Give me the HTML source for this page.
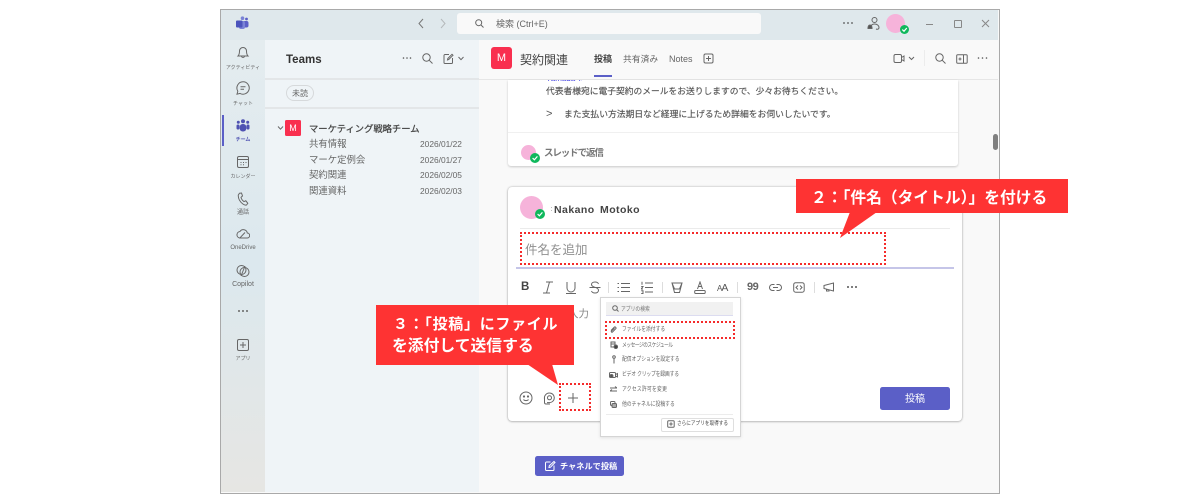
<!DOCTYPE html>
<html lang="ja"><head><meta charset="utf-8"><style>
html,body{margin:0;padding:0;background:#fff}
#p{position:relative;width:1200px;height:500px;overflow:hidden;background:#fff;font-family:"Liberation Sans","Noto Sans CJK JP",sans-serif;color:#424242}
#p div,#p svg{position:absolute}
.t{white-space:nowrap;line-height:1}
svg{fill:none;stroke:#666;stroke-width:1}
.rl{width:44px;left:221px;text-align:center;font-size:5px;color:#666;white-space:nowrap;line-height:1}
.m{left:622px;font-size:6px;color:#666;white-space:nowrap;line-height:1;transform:scaleX(.8);transform-origin:0 0}
.d{font-size:8.4px;color:#666;left:420px;line-height:1;white-space:nowrap}
.c{font-size:9.4px;color:#666;left:309px;line-height:1;white-space:nowrap}
</style></head><body><div id="p">
<!-- window -->
<div style="left:220px;top:9px;width:778px;height:483px;border:1px solid #a9a9a9;background:#f9f9f9"></div>
<div style="left:221px;top:10px;width:777px;height:30px;background:#dfe8ec"></div>
<div style="left:221px;top:40px;width:44px;height:452px;background:linear-gradient(#e4ecef,#dce8ee 50%,#e6e6e3)"></div>
<div style="left:265px;top:40px;width:214px;height:452px;background:#eff4f7"></div>
<div style="left:265px;top:78px;width:214px;height:2px;background:#e3e6e8"></div>
<div style="left:265px;top:107px;width:214px;height:2px;background:#e3e6e8"></div>
<div style="left:479px;top:40px;width:519px;height:39px;background:#f9f9f9;border-bottom:1px solid #e6e6e6"></div>

<!-- title bar -->
<svg style="left:235px;top:16px;stroke:none" width="14" height="14" viewBox="0 0 14 14"><circle cx="7.5" cy="2.2" r="1.8" fill="#7b83d6"/><circle cx="11.5" cy="3" r="1.4" fill="#5b5fc7"/><rect x="8" y="5" width="5.5" height="6.5" rx="2" fill="#5b5fc7"/><rect x="4" y="5" width="6" height="8" rx="2" fill="#7b83d6"/><rect x="1" y="4.5" width="6.5" height="7" rx="1" fill="#4b53bc"/></svg>
<svg style="left:417px;top:18px" width="8" height="11" viewBox="0 0 8 11"><path d="M6 1L2 5.5L6 10" stroke="#777"/></svg>
<svg style="left:439px;top:18px" width="8" height="11" viewBox="0 0 8 11"><path d="M2 1L6 5.5L2 10" stroke="#b5b9bb"/></svg>
<div style="left:457px;top:13px;width:304px;height:21px;background:#f9f9f9;border-radius:3px"></div>
<svg style="left:475px;top:19px" width="9" height="9" viewBox="0 0 9 9"><circle cx="3.7" cy="3.7" r="3"/><path d="M6 6L8.5 8.5"/></svg>
<div class="t" style="left:496px;top:20px;font-size:9px;color:#666">検索 (Ctrl+E)</div>
<svg style="left:842px;top:19px;stroke:none" width="12" height="8"><circle cx="2" cy="4" r=".9" fill="#555"/><circle cx="6" cy="4" r=".9" fill="#555"/><circle cx="10" cy="4" r=".9" fill="#555"/></svg>
<svg style="left:867px;top:16px" width="13" height="15" viewBox="0 0 13 15"><circle cx="7.5" cy="4" r="2.5"/><path d="M3 13c0-3 2-5 4.500-5s4.500 1.500 4.500 3.500-2 2-3 1.500"/><path d="M1 12.500c0-3 1-3.500 2-3.500s2 .5 2 3.500z" fill="#555"/></svg>
<div style="left:886px;top:14px;width:19px;height:19px;border-radius:50%;background:#f6b3da"></div>
<svg style="left:900px;top:25px;stroke:none" width="9" height="9" viewBox="0 0 9 9"><circle cx="4.5" cy="4.5" r="4.5" fill="#0fb85c"/><path d="M2.3 4.600L4 6.200L6.800 3" style="stroke:#fff;stroke-width:1.2"/></svg>
<div style="left:926px;top:24px;width:7px;height:1px;background:#888"></div>
<div style="left:954px;top:20px;width:6px;height:6px;border:1px solid #888;border-radius:1px"></div>
<svg style="left:981px;top:19px" width="9" height="9"><path d="M1 1L8 8M8 1L1 8" stroke="#888"/></svg>

<!-- rail -->
<svg style="left:236px;top:45px" width="14" height="15" viewBox="0 0 14 15"><path d="M2 11c1-1 1.500-2 1.500-5a3.500 3.500 0 017 0c0 3 .5 4 1.500 5zM5.500 11.500a1.600 1.600 0 003 0"/></svg>
<div class="rl" style="top:65.5px">アクティビティ</div>
<svg style="left:236px;top:81px" width="14" height="14" viewBox="0 0 14 14"><path d="M7 .8a6.200 6.200 0 11-3 11.600L1 13.200l.8-3A6.200 6.200 0 017 .8zM4.500 5.800h5M4.500 8.300h3.500"/></svg>
<div class="rl" style="top:101.5px">チャット</div>
<div style="left:222px;top:115px;width:2px;height:31px;background:#5b5fc7"></div>
<svg style="left:236px;top:119px;stroke:none" width="14" height="13" viewBox="0 0 14 13"><circle cx="7" cy="2.3" r="2" fill="#4f52b2"/><circle cx="2.3" cy="3.2" r="1.5" fill="#4f52b2"/><circle cx="11.7" cy="3.2" r="1.5" fill="#4f52b2"/><rect x="3.7" y="5" width="6.6" height="7.5" rx="3" fill="#4f52b2"/><rect x=".5" y="5.5" width="3" height="5" rx="1.4" fill="#4f52b2"/><rect x="10.5" y="5.5" width="3" height="5" rx="1.4" fill="#4f52b2"/></svg>
<div class="rl" style="top:137.5px;color:#4f52b2;font-weight:bold">チーム</div>
<svg style="left:236px;top:155px" width="14" height="14" viewBox="0 0 14 14"><rect x="1.5" y="1.5" width="11" height="11" rx="1.5"/><path d="M1.500 4.500h11M4.500 7.500h1M7 7.500h1M9.500 7.500h1M4.500 9.800h1M7 9.800h1"/></svg>
<div class="rl" style="top:174.5px">カレンダー</div>
<svg style="left:237px;top:192px" width="12" height="14" viewBox="0 0 12 14"><path d="M2.500 1.200L4.500 1l1 3-1.500 1.300c.4 1.800 1.500 3.300 3 4.300l1.800-.8 2 2.500-1.200 1.600c-1 .5-2.500 0-3.700-.9C3 10 1 6.500 1.300 3z"/></svg>
<div class="rl" style="top:210px;font-size:6px">通話</div>
<svg style="left:236px;top:228px" width="14" height="11" viewBox="0 0 14 11"><path d="M3.500 10h7.500a2.500 2.500 0 00.3-5A4 4 0 004 3.500 3.300 3.300 0 003.500 10zM4 9.800L9 4.500"/></svg>
<div class="rl" style="top:245px;font-size:6px">OneDrive</div>
<svg style="left:236px;top:264px" width="14" height="14" viewBox="0 0 14 14"><circle cx="5.5" cy="6" r="4.5"/><circle cx="8.5" cy="8" r="4.5"/><path d="M5 12L9 2"/></svg>
<div class="rl" style="top:281px;font-size:7px">Copilot</div>
<svg style="left:237px;top:308px;stroke:none" width="12" height="6"><circle cx="2" cy="3" r="1" fill="#666"/><circle cx="6" cy="3" r="1" fill="#666"/><circle cx="10" cy="3" r="1" fill="#666"/></svg>
<svg style="left:236px;top:338px" width="14" height="14" viewBox="0 0 14 14"><rect x="1.5" y="1.5" width="11" height="11" rx="1.5"/><path d="M7 4v6M4 7h6"/></svg>
<div class="rl" style="top:356.5px">アプリ</div>

<!-- teams panel -->
<div class="t" style="left:286px;top:54.5px;font-size:11.5px;font-weight:bold;color:#333">Teams</div>
<svg style="left:402px;top:55px;stroke:none" width="10" height="6"><circle cx="1.5" cy="3" r=".8" fill="#555"/><circle cx="5" cy="3" r=".8" fill="#555"/><circle cx="8.5" cy="3" r=".8" fill="#555"/></svg>
<svg style="left:422px;top:53px" width="11" height="11" viewBox="0 0 11 11"><circle cx="4.5" cy="4.5" r="3.7"/><path d="M7.300 7.300L10.500 10.500"/></svg>
<svg style="left:443px;top:53px" width="22" height="11" viewBox="0 0 22 11"><path d="M6 1.500H2a1 1 0 00-1 1v7a1 1 0 001 1h6.500a1 1 0 001-1V5M4.500 7l.3-1.500L9 1.300 10 2.300 5.800 6.500z"/><path d="M15.500 4l2.500 2.700L20.500 4"/></svg>
<div class="t" style="left:286px;top:85px;width:26px;height:14px;border:1px solid #d6d9db;border-radius:8px;font-size:8px;line-height:15px;text-align:center;color:#666">未読</div>
<svg style="left:277px;top:125px" width="7" height="6"><path d="M1 1.500L3.500 4.200L6 1.500" stroke="#666"/></svg>
<div class="t" style="left:285px;top:120px;width:16px;height:16px;background:#f92f4f;border-radius:1.5px;color:#fff;font-size:9px;line-height:16px;text-align:center">M</div>
<div class="t" style="left:309px;top:125px;font-size:9.3px;color:#444;-webkit-text-stroke:.25px #444">マーケティング戦略チーム</div>
<div class="c" style="top:139px">共有情報</div><div class="d" style="top:140px">2026/01/22</div>
<div class="c" style="top:155px">マーケ定例会</div><div class="d" style="top:156px">2026/01/27</div>
<div class="c" style="top:170px">契約関連</div><div class="d" style="top:171px">2026/02/05</div>
<div class="c" style="top:186px">関連資料</div><div class="d" style="top:187px">2026/02/03</div>

<!-- channel header -->
<div class="t" style="left:491px;top:47px;width:21px;height:22px;background:#f92f4f;border-radius:3px;color:#fff;font-size:11px;line-height:22px;text-align:center">M</div>
<div class="t" style="left:520px;top:54px;font-size:12px;color:#424242">契約関連</div>
<div class="t" style="left:594px;top:55px;font-size:9px;font-weight:bold;color:#444">投稿</div>
<div style="left:594px;top:75px;width:18px;height:2px;background:#5b5fc7"></div>
<div class="t" style="left:623px;top:55px;font-size:8.8px;color:#666">共有済み</div>
<div class="t" style="left:669px;top:55px;font-size:9px;color:#666">Notes</div>
<svg style="left:703px;top:53px" width="11" height="11" viewBox="0 0 11 11"><rect x="1" y="1" width="9" height="9" rx="1.5"/><path d="M5.500 3v5M3 5.500h5"/></svg>
<svg style="left:893px;top:53px" width="24" height="11" viewBox="0 0 24 11"><rect x="1" y="1.5" width="7.5" height="8" rx="1.5"/><path d="M8.500 4.500L11 3v5L8.500 6.500M16 4l2.500 2.500L21 4"/></svg>
<div style="left:924px;top:50px;width:1px;height:16px;background:#ececec"></div>
<svg style="left:935px;top:53px" width="11" height="11" viewBox="0 0 11 11"><circle cx="4.5" cy="4.5" r="3.7"/><path d="M7.300 7.300L10.500 10.500"/></svg>
<svg style="left:956px;top:54px" width="12" height="10" viewBox="0 0 12 10"><rect x=".7" y=".7" width="10.500" height="8.500" rx="1"/><path d="M7.500 .7v8.500M2.500 5h3M4 3.500v3"/></svg>
<svg style="left:977px;top:55px;stroke:none" width="11" height="6"><circle cx="1.5" cy="3" r=".8" fill="#555"/><circle cx="5.5" cy="3" r=".8" fill="#555"/><circle cx="9.5" cy="3" r=".8" fill="#555"/></svg>

<!-- message card -->
<div style="left:508px;top:80px;width:450px;height:86px;background:#fff;border-radius:0 0 3px 3px;box-shadow:0 1px 2px rgba(0,0,0,.2)"></div>
<div class="t" style="left:546px;top:80px;height:2px;font-size:8px;color:#3a3ae0;overflow:hidden;width:36px"><span style="position:relative;top:-5px">Yamada Taro</span></div>
<div class="t" style="left:546px;top:87px;font-size:8.75px;color:#555;-webkit-text-stroke:.15px #555">代表者様宛に電子契約のメールをお送りしますので、少々お待ちください。</div>
<div class="t" style="left:546px;top:109px;font-size:11px;color:#555">&gt;</div>
<div class="t" style="left:564px;top:110px;font-size:8.8px;color:#555;-webkit-text-stroke:.15px #555">また支払い方法期日など経理に上げるため詳細をお伺いしたいです。</div>
<div style="left:508px;top:132px;width:450px;height:1px;background:#f0f0f0"></div>
<div style="left:521px;top:145px;width:15px;height:15px;border-radius:50%;background:#f6b3da"></div>
<svg style="left:530px;top:153px;stroke:none" width="10" height="10" viewBox="0 0 10 10"><circle cx="5" cy="5" r="5" fill="#0fb85c"/><path d="M2.600 5.100L4.400 6.800L7.400 3.400" style="stroke:#fff;stroke-width:1.2"/></svg>
<div class="t" style="left:544px;top:149px;font-size:9.5px;color:#777;font-weight:bold;letter-spacing:-1.1px">スレッドで返信</div>

<!-- scrollbar -->
<div style="left:993px;top:134px;width:5px;height:16px;background:#808080;border-radius:3px"></div>

<!-- compose card -->
<div style="left:508px;top:187px;width:454px;height:234px;background:#fff;border-radius:4px;box-shadow:0 0 2px rgba(0,0,0,.3),0 1px 2px rgba(0,0,0,.15)"></div>
<div style="left:520px;top:196px;width:23px;height:23px;border-radius:50%;background:#f6b3da"></div>
<svg style="left:535px;top:209px;stroke:none" width="10" height="10" viewBox="0 0 10 10"><circle cx="5" cy="5" r="5" fill="#0fb85c"/><path d="M2.600 5.100L4.400 6.800L7.400 3.400" style="stroke:#fff;stroke-width:1.2"/></svg>
<div style="left:551px;top:207px;width:1px;height:1px;background:#bbb"></div>
<div style="left:551px;top:210px;width:1px;height:1px;background:#bbb"></div>
<div class="t" style="left:554px;top:205px;font-size:10.5px;font-weight:bold;color:#444;letter-spacing:.45px;word-spacing:2px">Nakano Motoko</div>
<div style="left:520px;top:228px;width:430px;height:1px;background:#ebebeb"></div>
<div class="t" style="left:525px;top:244px;font-size:12.5px;color:#8f8f8f">件名を追加</div>
<div style="left:516px;top:267px;width:438px;height:2px;background:#c5c5e8"></div>
<div style="left:520px;top:232px;width:362px;height:29px;border:2px dotted #f52b2b"></div>

<!-- toolbar -->
<div class="t" style="left:521px;top:282px;font-size:11.5px;font-weight:bold;color:#444">B</div>
<svg style="left:542px;top:281px" width="12" height="13" viewBox="0 0 12 13"><path d="M4 1h7M1 12h7M7.500 1L4.500 12"/></svg>
<svg style="left:565px;top:281px" width="12" height="13" viewBox="0 0 12 13"><path d="M2 1v6a4 4 0 008 0V1M1 12.500h10"/></svg>
<svg style="left:589px;top:281px" width="12" height="13" viewBox="0 0 12 13"><path d="M9.500 3C9 1.500 7.500 1 6 1 4 1 2.500 2 2.500 3.500S4 5.700 6 6.300s3.500 1.300 3.500 3S8 12 6 12c-1.500 0-3-.5-3.500-2M.5 6.500h11"/></svg>
<div style="left:608px;top:282px;width:1px;height:11px;background:#ddd"></div>
<svg style="left:617px;top:282px" width="13" height="11" viewBox="0 0 13 11"><path d="M4 1.500h9M4 5.500h9M4 9.500h9M.5 1.500h1.500M.5 5.500h1.500M.5 9.500h1.500"/></svg>
<svg style="left:641px;top:281px" width="12" height="13" viewBox="0 0 12 13"><path d="M4 2h8M4 6.500h8M4 11h8M1 .8v3M.2 5.500h1.800L.2 8h1.800M.2 9.800h1.800v2.700H.2"/></svg>
<div style="left:662px;top:282px;width:1px;height:11px;background:#ddd"></div>
<svg style="left:671px;top:281px" width="12" height="13" viewBox="0 0 12 13"><path d="M1 2h10L8.500 8h-5zM1 2l2.500 9.500h5L11 2"/></svg>
<svg style="left:694px;top:281px" width="12" height="13" viewBox="0 0 12 13"><path d="M3.500 8L6 1l2.500 7M4.500 5.500h3"/><rect x=".7" y="9.500" width="10.500" height="3" rx="1"/></svg>
<div class="t" style="left:717px;top:283px;font-size:10.5px;color:#555;letter-spacing:-1px"><span style="font-size:8px">A</span>A</div>
<div style="left:737px;top:282px;width:1px;height:11px;background:#ddd"></div>
<div class="t" style="left:747px;top:282px;font-size:11px;font-weight:bold;color:#666;letter-spacing:-.5px">99</div>
<svg style="left:769px;top:283px" width="13" height="9" viewBox="0 0 13 9"><path d="M5.500 1.500H3.500a3 3 0 000 6h2M7.500 1.500h2a3 3 0 010 6h-2M4 4.500h5"/></svg>
<svg style="left:793px;top:282px" width="12" height="11" viewBox="0 0 12 11"><rect x=".7" y=".7" width="10.500" height="9.500" rx="2"/><path d="M5 3.500L3 5.500l2 2M7 3.500l2 2-2 2"/></svg>
<div style="left:814px;top:282px;width:1px;height:11px;background:#ddd"></div>
<svg style="left:823px;top:282px" width="12" height="11" viewBox="0 0 12 11"><path d="M1 3.500L10.500 1v8L1 6.500zM3.500 7v2h2.500V8"/></svg>
<svg style="left:846px;top:284px;stroke:none" width="12" height="6"><circle cx="2" cy="3" r="1" fill="#555"/><circle cx="6" cy="3" r="1" fill="#555"/><circle cx="10" cy="3" r="1" fill="#555"/></svg>

<div class="t" style="left:568px;top:309px;font-size:10.5px;color:#888">入力</div>

<!-- bottom icons -->
<svg style="left:519px;top:391px" width="14" height="14" viewBox="0 0 14 14"><circle cx="7" cy="7" r="6"/><path d="M4.500 8.500c1 1.500 4 1.500 5 0"/><circle cx="5" cy="5.500" r=".6" fill="#555"/><circle cx="9" cy="5.500" r=".6" fill="#555"/></svg>
<svg style="left:543px;top:392px" width="12" height="13" viewBox="0 0 12 13"><path d="M6.500 1a4.800 4.800 0 110 9.600H4M1.500 7A5 5 0 016.500 1M1.500 4.500v6a1.500 1.500 0 001.500 1.500h4"/><circle cx="6.500" cy="5.800" r="2"/></svg>
<svg style="left:567px;top:392px" width="12" height="12"><path d="M6 1v10M1 6h10" stroke="#666"/></svg>
<div style="left:559px;top:383px;width:28px;height:24px;border:2px dotted #f52b2b"></div>
<div class="t" style="left:880px;top:387px;width:70px;height:23px;background:#5b5fc7;border-radius:2.5px;color:#fff;font-size:10px;line-height:25px;text-align:center">投稿</div>

<!-- popup -->
<div style="left:600px;top:297px;width:139px;height:138px;background:#fff;border:1px solid #d5d5d5;box-shadow:0 1px 3px rgba(0,0,0,.1)"></div>
<div style="left:606px;top:302px;width:127px;height:13px;background:#f1f1f1;border-bottom:1px solid #dcdcf0"></div>
<svg style="left:612px;top:305px" width="7" height="7" viewBox="0 0 7 7"><circle cx="3" cy="3" r="2.3"/><path d="M4.700 4.700L6.500 6.500"/></svg>
<div class="m" style="left:621px;top:307px;color:#777">アプリの検索</div>
<div class="m" style="top:327px">ファイルを添付する</div>
<svg style="left:610px;top:326px" width="7" height="7" viewBox="0 0 7 7"><path d="M1 4.500L4.500 1a1.200 1.200 0 011.500 1.500L2.500 6A.7.7 0 011.500 5L4.500 2.300"/></svg>
<div class="m" style="top:343px;letter-spacing:-.7px">メッセージのスケジュール</div>
<svg style="left:610px;top:341px" width="8" height="8" viewBox="0 0 8 8"><path d="M1 1h4v5H1zM1 3h4"/><circle cx="5.8" cy="5.800" r="1.8" fill="#444"/></svg>
<div class="m" style="top:357px">配信オプションを設定する</div>
<svg style="left:611px;top:355px" width="6" height="9" viewBox="0 0 6 9"><circle cx="3" cy="2" r="1.3"/><path d="M3 3.500v5"/></svg>
<div class="m" style="top:372px;letter-spacing:-.2px">ビデオ クリップを録画する</div>
<svg style="left:609px;top:371px" width="9" height="8" viewBox="0 0 9 8"><rect x=".5" y="1.5" width="6" height="5" rx="1"/><circle cx="2.5" cy="5" r="1.5" fill="#555"/><path d="M6.500 3.500L8.500 2.500v3.500L6.500 5"/></svg>
<div class="m" style="top:387px;letter-spacing:.3px">アクセス許可を変更</div>
<svg style="left:610px;top:386px" width="7" height="7" viewBox="0 0 7 7"><path d="M0 2h7M0 5h7M5 .5L7 2M2 3.500L0 5"/></svg>
<div class="m" style="top:402px">他のチャネルに投稿する</div>
<svg style="left:610px;top:401px" width="7" height="7" viewBox="0 0 7 7"><rect x=".5" y=".5" width="4.5" height="4" rx="1"/><rect x="2" y="2.5" width="4.5" height="4" rx="1" fill="#aaa"/></svg>
<div style="left:606px;top:414px;width:127px;height:1px;background:#ececec"></div>
<div style="left:661px;top:418px;width:71px;height:12px;border:1px solid #dfdfdf;border-radius:2px;background:#fff"></div>
<svg style="left:667px;top:420px" width="8" height="8" viewBox="0 0 8 8"><rect x=".7" y=".7" width="6.5" height="6.500" rx="1"/><path d="M4 2.300v3.400M2.300 4h3.400"/></svg>
<div class="m" style="left:677px;top:422px;font-size:5.8px;color:#444">さらにアプリを取得する</div>
<div style="left:605px;top:321px;width:126px;height:14px;border:2px dotted #f52b2b"></div>

<!-- new post -->
<div class="t" style="left:535px;top:456px;width:89px;height:20px;background:#5b5fc7;border-radius:2.5px"></div>
<svg style="left:544px;top:460px" width="12" height="12" viewBox="0 0 12 12"><path d="M6.500 2H2.500a1 1 0 00-1 1v6.500a1 1 0 001 1H9a1 1 0 001-1V5.500M5 7.500l.3-1.700L10 1.500l1 1L6.500 7.200z" stroke="#fff"/></svg>
<div class="t" style="left:560px;top:463px;font-size:8.2px;font-weight:bold;color:#fff">チャネルで投稿</div>

<!-- callouts -->
<svg style="left:370px;top:300px;stroke:none" width="230" height="100"><path d="M157 64L188 85L182 64z" fill="#fe3333"/></svg>
<div style="left:376px;top:305px;width:198px;height:60px;background:#fe3333"></div>
<div class="t" style="left:393px;top:317px;font-size:15px;font-weight:bold;color:#fff;letter-spacing:.7px">３：「投稿」にファイル</div>
<div class="t" style="left:392px;top:339px;font-size:15.8px;font-weight:bold;color:#fff">を添付して送信する</div>

<svg style="left:830px;top:205px;stroke:none" width="50" height="40"><path d="M20 7L10 33L47 7z" fill="#fe3333"/></svg>
<div style="left:796px;top:179px;width:272px;height:34px;background:#fe3333"></div>
<div class="t" style="left:811px;top:191px;font-size:15.75px;font-weight:bold;color:#fff">２：「件名（タイトル）」を付ける</div>
</div></body></html>
